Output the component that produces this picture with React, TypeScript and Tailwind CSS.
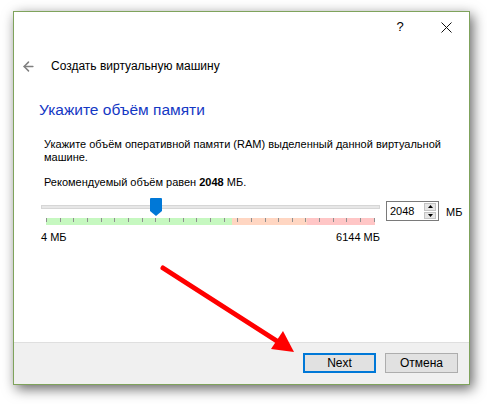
import { ArrowLeft } from "lucide-react";

const TICKS = Array.from({ length: 25 }, (_, i) => i);

export default function App() {
  // --- RENDER ---

  return (
    <div className="relative w-[487px] h-[404px] bg-white pl-[13px] pt-[11px] font-['Liberation_Sans',Arial,sans-serif] text-black">
      <div className="w-[457px] h-[374px] border border-[#7fa35c] bg-white flex flex-col shadow-[3px_4px_12px_rgba(0,0,0,0.6)]">
        {/* caption buttons */}
        <div className="h-[30px] flex justify-end">
          <div className="w-[46px] flex items-center justify-center text-[13px]">?</div>
          <div className="w-[46px] flex items-center justify-center">
            <svg width="11" height="11" viewBox="0 0 11 11">
              <path d="M0.5 0.5 L10.5 10.5 M10.5 0.5 L0.5 10.5" stroke="#111" strokeWidth="1" />
            </svg>
          </div>
        </div>

        <div className="flex-1 flex flex-col">
          <div className="mt-[12px] h-[24px] flex items-center pl-[7px]">
            <ArrowLeft size={15} strokeWidth={2.4} className="text-[#808080]" />
            <span className="ml-[15px] text-[12px]">Создать виртуальную машину</span>
          </div>

          <h1 className="mt-[22px] pl-[25px] text-[15.5px] leading-[20px] text-[#1438c4]">
            Укажите объём памяти
          </h1>

          <p className="mt-[18px] pl-[30px] pr-[20px] text-[11px] leading-[13px]">
            Укажите объём оперативной памяти (RAM) выделенный данной виртуальной машине.
          </p>

          <p className="mt-[12px] pl-[30px] text-[11px] leading-[13px]">
            Рекомендуемый объём равен <b>2048</b> МБ.
          </p>

          <div className="mt-[9px] pl-[27px] flex items-start">
            <div className="w-[339px]">
              <div className="relative h-[18px] pt-[7px]">
                <div className="h-[4px] border border-[#d6d6d6] bg-[#e7e7e7]" />
                <svg className="absolute left-[109px] top-0" width="12" height="18" viewBox="0 0 12 18">
                  <path d="M0 1 Q0 0 1 0 L11 0 Q12 0 12 1 L12 13 L6 18 L0 13 Z" fill="#0078d7" />
                </svg>
              </div>
              <div className="relative mx-[5px] mt-[2px] h-[7px] flex">
                <div className="w-[186px] bg-[#c6f8c0]" />
                <div className="w-[75px] bg-[#ffd6c2]" />
                <div className="flex-1 bg-[#ffc6c6]" />
                <div className="absolute inset-x-0 top-0 flex justify-between">
                  {TICKS.map((t) => (
                    <div key={t} className="w-px h-[4px] bg-[#8f8f8f]" />
                  ))}
                </div>
              </div>
              <div className="mt-[6px] flex justify-between text-[11px] leading-[13px]">
                <span>4 МБ</span>
                <span>6144 МБ</span>
              </div>
            </div>

            <div className="ml-[6px] mt-[3px] w-[53px] h-[20px] border border-[#7a7a7a] bg-white flex items-center pl-[3px] pr-[2px]">
              <span className="flex-1 text-[11px]">2048</span>
              <div className="w-[12px] h-[16px] flex flex-col gap-px">
                <div className="flex-1 bg-[#e6e6e6] border border-[#c4c4c4] flex items-center justify-center">
                  <svg width="5" height="3" viewBox="0 0 5 3">
                    <path d="M2.5 0 L5 3 L0 3 Z" fill="#000" />
                  </svg>
                </div>
                <div className="flex-1 bg-[#e6e6e6] border border-[#c4c4c4] flex items-center justify-center">
                  <svg width="5" height="3" viewBox="0 0 5 3">
                    <path d="M0 0 L5 0 L2.5 3 Z" fill="#000" />
                  </svg>
                </div>
              </div>
            </div>
            <span className="ml-[7px] mt-[6px] text-[11px]">МБ</span>
          </div>
        </div>

        {/* footer */}
        <div className="h-[42px] border-t border-[#dfdfdf] bg-[#f0f0f0] flex justify-end items-start pt-[10px] pr-[11px] gap-[9px]">
          <button className="w-[73px] h-[20px] border-2 border-[#0078d7] bg-[#e1e1e1] text-[12px] leading-none">
            Next
          </button>
          <button className="w-[73px] h-[20px] border border-[#adadad] bg-[#e1e1e1] text-[12px] leading-none">
            Отмена
          </button>
        </div>
      </div>

      {/* red arrow annotation */}
      <svg className="absolute left-0 top-0 pointer-events-none" width="487" height="404" viewBox="0 0 487 404">
        <line x1="163" y1="268" x2="280" y2="343" stroke="#ff0000" strokeWidth="5" strokeLinecap="round" />
        <path d="M294 352 L271 349 L283 331 Z" fill="#ff0000" />
      </svg>
    </div>
  );
}
